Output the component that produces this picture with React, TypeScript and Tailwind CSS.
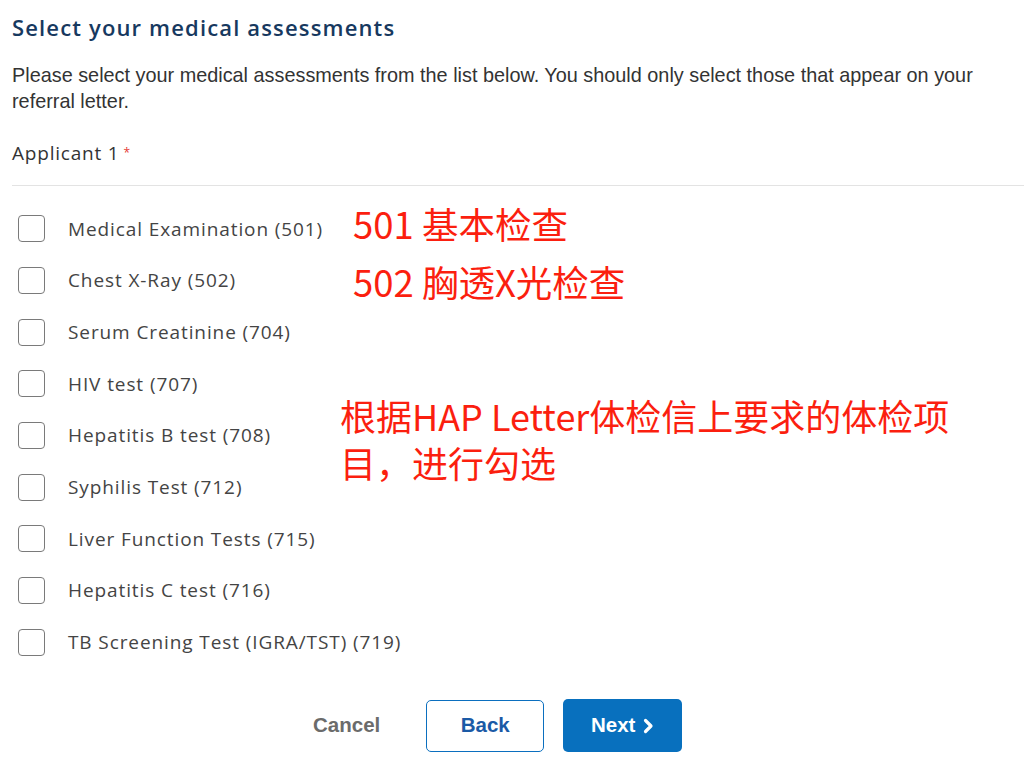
import React, { useState } from 'react';

const assessments = [
  'Medical Examination (501)',
  'Chest X-Ray (502)',
  'Serum Creatinine (704)',
  'HIV test (707)',
  'Hepatitis B test (708)',
  'Syphilis Test (712)',
  'Liver Function Tests (715)',
  'Hepatitis C test (716)',
  'TB Screening Test (IGRA/TST) (719)',
];

const labelFont = { fontFamily: '"Open Sans", "Liberation Sans", sans-serif' };

const App: React.FC = () => {
  const [checked, setChecked] = useState<Record<number, boolean>>({});

  return (
    <div className="relative w-[1024px] h-[759px] bg-white overflow-hidden">
      <div className="pl-3 pt-[12px]">
        {/* Heading */}
        <h1
          className="text-[22px] leading-[30px] text-[#17395f] font-semibold tracking-[1.15px]"
          style={labelFont}
        >
          Select your medical assessments
        </h1>

        <p className="mt-[20px] text-[19.85px] leading-[26px] text-[#333] font-['Liberation_Sans',Arial,sans-serif] pr-10">
          Please select your medical assessments from the list below. You should only select those that appear on your
          referral letter.
        </p>

        <div className="mt-[27px] text-[19px] leading-[24px] text-[#333] tracking-[0.8px]" style={labelFont}>
          Applicant 1<span className="text-[#e53935] text-[12px] align-top ml-[4px]">*</span>
        </div>

        <div className="mt-[20px] border-t border-[#e3e3e3]" />

        {/* Checkbox list */}
        <ul className="mt-[17px] flex flex-col">
          {assessments.map((label, i) => (
            <li key={label} className="h-[51.7px] flex items-center">
              <label className="flex items-center cursor-pointer">
                <span
                  onClick={() => setChecked(prev => ({ ...prev, [i]: !prev[i] }))}
                  className="ml-[6px] w-[27px] h-[27px] rounded-[4px] border-[1.5px] border-[#7a7a7a] bg-white flex items-center justify-center"
                >
                  {checked[i] && <span className="w-3 h-3 bg-[#0b6fbf] rounded-[2px]" />}
                </span>
                <span className="ml-[23px] text-[19px] font-medium text-[#444] tracking-[0.9px]" style={labelFont}>
                  {label}
                </span>
              </label>
            </li>
          ))}
        </ul>
      </div>

      {/* Buttons */}
      <div className="absolute left-0 right-0 top-[699px] flex items-center">
        <button className="ml-[313px] text-[20.5px] font-bold text-[#6b6b6b] font-['Liberation_Sans',Arial,sans-serif]">
          Cancel
        </button>
        <button className="ml-[46px] w-[118px] h-[52px] rounded-[5px] border border-[#0b6fbf] bg-white text-[20.5px] font-bold text-[#1b5aa6] font-['Liberation_Sans',Arial,sans-serif]">
          Back
        </button>
        <button className="ml-[19px] w-[119px] h-[53px] rounded-[5px] bg-[#0870be] text-white text-[20.5px] font-bold font-['Liberation_Sans',Arial,sans-serif] flex items-center justify-center gap-[8px]">
          Next
          <svg width="11" height="16" viewBox="0 0 11 16" fill="none">
            <path d="M2.5 2.5 L8 8 L2.5 13.5" stroke="white" strokeWidth="3.2" strokeLinecap="round" strokeLinejoin="round" />
          </svg>
        </button>
      </div>

      {/* Red annotations over the screenshot */}
      <div className="absolute left-[353px] top-[199px] text-[36.5px] leading-[50px] text-[#fb1f0f] font-['Noto_Sans_CJK_SC',sans-serif]">
        501 基本检查
      </div>
      <div className="absolute left-[353px] top-[257px] text-[36.5px] leading-[50px] text-[#fb1f0f] font-['Noto_Sans_CJK_SC',sans-serif]">
        502 胸透X光检查
      </div>
      <div className="absolute left-[340px] top-[392px] w-[615px] text-[36px] leading-[47px] text-[#fb1f0f] font-['Noto_Sans_CJK_SC',sans-serif]">
        根据HAP Letter体检信上要求的体检项目，进行勾选
      </div>
    </div>
  );
};

export default App;
